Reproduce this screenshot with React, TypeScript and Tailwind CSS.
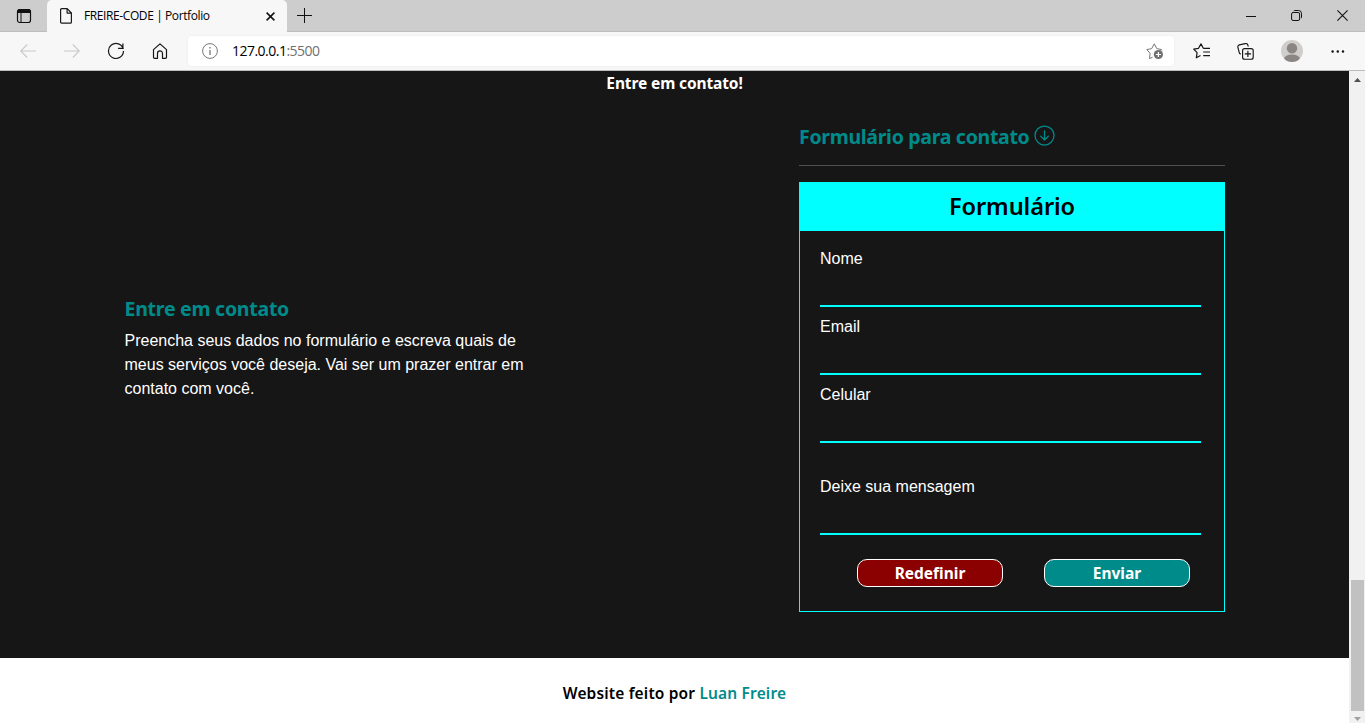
import React from "react";

const ubuntu = "font-['Noto_Sans','Open_Sans',sans-serif]";

function TabBar() {
  return (
    <div className="flex h-8 bg-[#cdcdcd]">
      <div className="flex w-[47px] items-center justify-center border-b border-[#bdbdbd]">
        <svg width="16" height="16" viewBox="0 0 16 16" fill="none" stroke="#111" className="block">
          <rect x="1.5" y="1.5" width="13" height="13" rx="2.2" strokeWidth="1.2" />
          <path d="M1.5 4.500V3.5a2 2 0 0 1 2-2h9a2 2 0 0 1 2 2v1z" fill="#111" />
          <path d="M5 5v9.5" strokeWidth="1" />
        </svg>
      </div>
      <div className="flex w-60 items-center rounded-t-[5px] bg-[#f7f7f7] pl-3">
        <svg width="14" height="16" viewBox="0 0 14 16" fill="none" stroke="#1a1a1a" strokeWidth="1.2" strokeLinejoin="round">
          <path d="M2.6 .7h5.6l4.2 4.3v9.2a1 1 0 0 1-1 1H2.6a1 1 0 0 1-1-1V1.700a1 1 0 0 1 1-1zM8.100.8v4.300h4.200" />
        </svg>
        <span className="ml-[11px] w-[170px] whitespace-nowrap font-['Open_Sans','Noto_Sans',sans-serif] text-[12px] leading-4 tracking-[-0.4px] text-black">
          FREIRE-CODE | Portfolio
        </span>
        <svg width="9" height="9" viewBox="0 0 9 9" stroke="#111" strokeWidth="1.5" className="ml-[12px]">
          <path d="M.6 .6l7.800 7.800M8.400.6L.6 8.400" />
        </svg>
      </div>
      <div className="flex flex-1 items-center border-b border-[#bdbdbd] pl-[10px]">
        <svg width="15" height="15" viewBox="0 0 15 15" stroke="#111" strokeWidth="1">
          <path d="M0 7.500h15M7.500 0v15" />
        </svg>
        <div className="ml-auto flex items-center pr-[17px]">
          <svg width="10" height="11" viewBox="0 0 10 11" stroke="#111">
            <path d="M0 6.500h10" />
          </svg>
          <svg width="11" height="11" viewBox="0 0 11 11" fill="none" stroke="#111" className="ml-[35px]">
            <rect x=".6" y="2.500" width="8" height="8" rx="1.500" />
            <path d="M2.700 .9c.2-.3.6-.4 1-.4h3.800a3 3 0 0 1 3 3v3.800c0 .5-.2.900-.6 1.100" />
          </svg>
          <svg width="11" height="11" viewBox="0 0 11 11" stroke="#111" strokeWidth="1.100" className="ml-[35px]">
            <path d="M.4 .4l10.200 10.200M10.600.4L.4 10.600" />
          </svg>
        </div>
      </div>
    </div>
  );
}

function Toolbar() {
  return (
    <div className="flex h-[39px] items-center border-b border-[#b9bdbc] bg-[#f7f7f7] pl-5 pr-[19px]">
      <svg width="16" height="14" viewBox="0 0 16 14" fill="none" stroke="#c8c8c8" strokeWidth="1.100">
        <path d="M16 7H.8M7.200.5L.7 7l6.500 6.500" />
      </svg>
      <svg width="16" height="14" viewBox="0 0 16 14" fill="none" stroke="#c8c8c8" strokeWidth="1.100" className="ml-7">
        <path d="M0 7h15.200M8.800.5L15.300 7l-6.500 6.500" />
      </svg>
      <svg width="18" height="18" viewBox="0 0 18 18" fill="none" stroke="#161616" strokeWidth="1.200" className="ml-[27px]">
        <path d="M16.300 7.200A7.500 7.500 0 1 0 16.500 9M15.900 1.500v4.800h-4.800" />
      </svg>
      <svg width="16" height="16" viewBox="0 0 16 16" fill="none" stroke="#161616" strokeWidth="1.200" strokeLinejoin="round" className="ml-[27px]">
        <path d="M1.500 6.600L8 .9l6.500 5.700v7.700a1 1 0 0 1-1 1H10.500V10.400a2.500 2.500 0 0 0-5 0v4.900h-3a1 1 0 0 1-1-1z" />
      </svg>
      <div className="ml-5 flex h-[30px] w-[986px] items-center rounded bg-white pl-[14px] pr-[10px] shadow-[0_0_3px_rgba(0,0,0,0.06)]">
        <svg width="16" height="16" viewBox="0 0 16 16" fill="none" stroke="#777">
          <circle cx="8" cy="8" r="7.400" />
          <path d="M8 7v5M8 4v1.600" strokeWidth="1.300" />
        </svg>
        <span className="ml-[14px] whitespace-nowrap font-['Open_Sans','Noto_Sans',sans-serif] text-[14px] leading-5 tracking-[-0.52px] text-black">
          127.0.0.1<span className="text-[#707070]">:5500</span>
        </span>
        <svg width="18" height="18" viewBox="0 0 18 18" fill="none" className="ml-auto">
          <path d="M6.500 15.300L3.500 16.600l.6-5.300-3.300-3.700 4.900-1L8.300 1.800l2.500 4.800 4.900 1-1.100 1.200" stroke="#777" strokeLinejoin="round" />
          <circle cx="12.400" cy="12.500" r="4.600" fill="#707070" />
          <path d="M12.400 9.900v5.200M9.800 12.500H15" stroke="white" strokeWidth="1.200" />
        </svg>
      </div>
      <svg width="17" height="16" viewBox="0 0 17 16" fill="none" stroke="#161616" strokeWidth="1.200" strokeLinejoin="round" className="ml-[19px]">
        <path d="M7.500 12.500l-4.200 2.300.8-5.100L.7 6.100l4.800-.8L8 .9l2.300 4.300M10.300 5.300h6.700M10.200 9h6.800M10.200 12.600h6.800" />
      </svg>
      <svg width="17" height="17" viewBox="0 0 17 17" fill="none" stroke="#161616" strokeWidth="1.150" strokeLinejoin="round" className="ml-[27px]">
        <rect x="5.600" y="5.600" width="10.600" height="10.600" rx="2" />
        <path d="M10.900 7.800v6.200M7.800 10.900H14M3.700 11.200L2.400 10.200 .9 4.300c-.3-1.300.3-2 1.400-2.400L8.200.6c1.300-.3 2.200.3 2.600 1.400l.5 1.600" />
      </svg>
      <svg width="22" height="22" viewBox="0 0 22 22" className="ml-[27px]">
        <defs><clipPath id="avatar"><circle cx="11" cy="11" r="11" /></clipPath></defs>
        <g clipPath="url(#avatar)">
          <path fill="#d0cecb" d="M0 0h22v22H0z" />
          <circle cx="11" cy="8.200" r="5.200" fill="#8b8683" />
          <ellipse cx="11" cy="19.400" rx="8" ry="5" fill="#8b8683" />
        </g>
      </svg>
      <svg width="15" height="3" viewBox="0 0 15 3" fill="#111" className="ml-7 shrink-0">
        <circle cx="1.600" cy="1.500" r="1.200" />
        <circle cx="6.800" cy="1.500" r="1.200" />
        <circle cx="12" cy="1.500" r="1.200" />
      </svg>
    </div>
  );
}

function Field({ label, className = "" }: { label: string; className?: string }) {
  return (
    <label className={`block h-[68px] ${className}`}>
      <span className="block h-6">{label}</span>
      <input className="block h-9 w-[381px] border-b-2 border-[#00ffff] bg-transparent outline-none" />
    </label>
  );
}

function Contact() {
  return (
    <section className="h-[587px] bg-[#161616] text-white">
      <h1 className={`h-[49px] text-center ${ubuntu} text-[15.5px] font-bold leading-6 tracking-[-0.12px]`}>
        Entre em contato!
      </h1>
      <div className="flex">
        <div className="ml-[124.5px] mt-[177px] w-[426px]">
          <h2 className={`${ubuntu} text-[19.5px] font-bold leading-6 tracking-[-0.25px] text-[#008b8b]`}>Entre em contato</h2>
          <p className="mt-2 w-[410px] text-[16px] leading-6">
            Preencha seus dados no formulário e escreva quais de meus serviços você deseja. Vai ser um prazer entrar em
            contato com você.
          </p>
        </div>
        <div className="ml-[248.5px] w-[426px]">
          <h2 className={`flex h-[46px] items-start whitespace-nowrap border-b border-[#505050] pt-[5px] ${ubuntu} text-[19.5px] font-bold leading-6 tracking-[-0.3px] text-[#008b8b]`}>
            <span className="w-[235px]">Formulário para contato</span>
            <svg width="21" height="21" viewBox="0 0 21 21" fill="none" stroke="#008b8b" strokeWidth="1.250" strokeLinecap="round" strokeLinejoin="round">
              <circle cx="10.500" cy="10.500" r="9.500" />
              <path d="M10.500 5.800v9.200M6.600 11.100l3.900 3.900 3.900-3.900" />
            </svg>
          </h2>
          <form className="mt-4 h-[430px] border border-[#00ffff]">
            <h3 className={`h-12 bg-[#00ffff] text-center ${ubuntu} text-[23.6px] font-semibold leading-[46px] tracking-[-0.1px] text-black`}>
              Formulário
            </h3>
            <div className="pl-5 pt-4 text-[16px] leading-6">
              <Field label="Nome" />
              <Field label="Email" />
              <Field label="Celular" />
              <Field label="Deixe sua mensagem" className="mt-6" />
            </div>
            <div className={`ml-[57px] mt-4 flex gap-[41px] ${ubuntu} text-[15.5px] font-bold leading-[26px]`}>
              <button type="reset" className="h-7 w-[146px] rounded-[10px] border border-white bg-[#8b0000]">
                Redefinir
              </button>
              <button type="button" className="h-7 w-[146px] rounded-[10px] border border-white bg-[#008b8b]">
                Enviar
              </button>
            </div>
          </form>
        </div>
      </div>
    </section>
  );
}

export default function App() {
  return (
    <div className="flex h-[723px] w-[1365px] flex-col overflow-hidden bg-white font-['Liberation_Sans',Arial,sans-serif]">
      <TabBar />
      <Toolbar />
      <div className="flex flex-1">
        <main className="w-[1349px]">
          <Contact />
          <footer className={`pt-[23px] text-center ${ubuntu} text-[15.5px] font-semibold leading-6 tracking-[0.16px] text-black`}>
            Website feito por <span className="text-[#008b8b]">Luan Freire</span>
          </footer>
        </main>
        <div className="flex w-4 flex-col items-center bg-[#f1f1f1]">
          <svg width="7" height="4" viewBox="0 0 7 4" className="mt-[7px]">
            <path d="M0 4L3.500 0 7 4z" fill="#505050" />
          </svg>
          <div className="mt-[498px] h-[131px] w-[13px] bg-[#c1c1c1]" />
          <svg width="7" height="4" viewBox="0 0 7 4" className="mt-[6px]">
            <path d="M0 0L3.500 4 7 0z" fill="#a0a0a0" />
          </svg>
        </div>
      </div>
    </div>
  );
}
